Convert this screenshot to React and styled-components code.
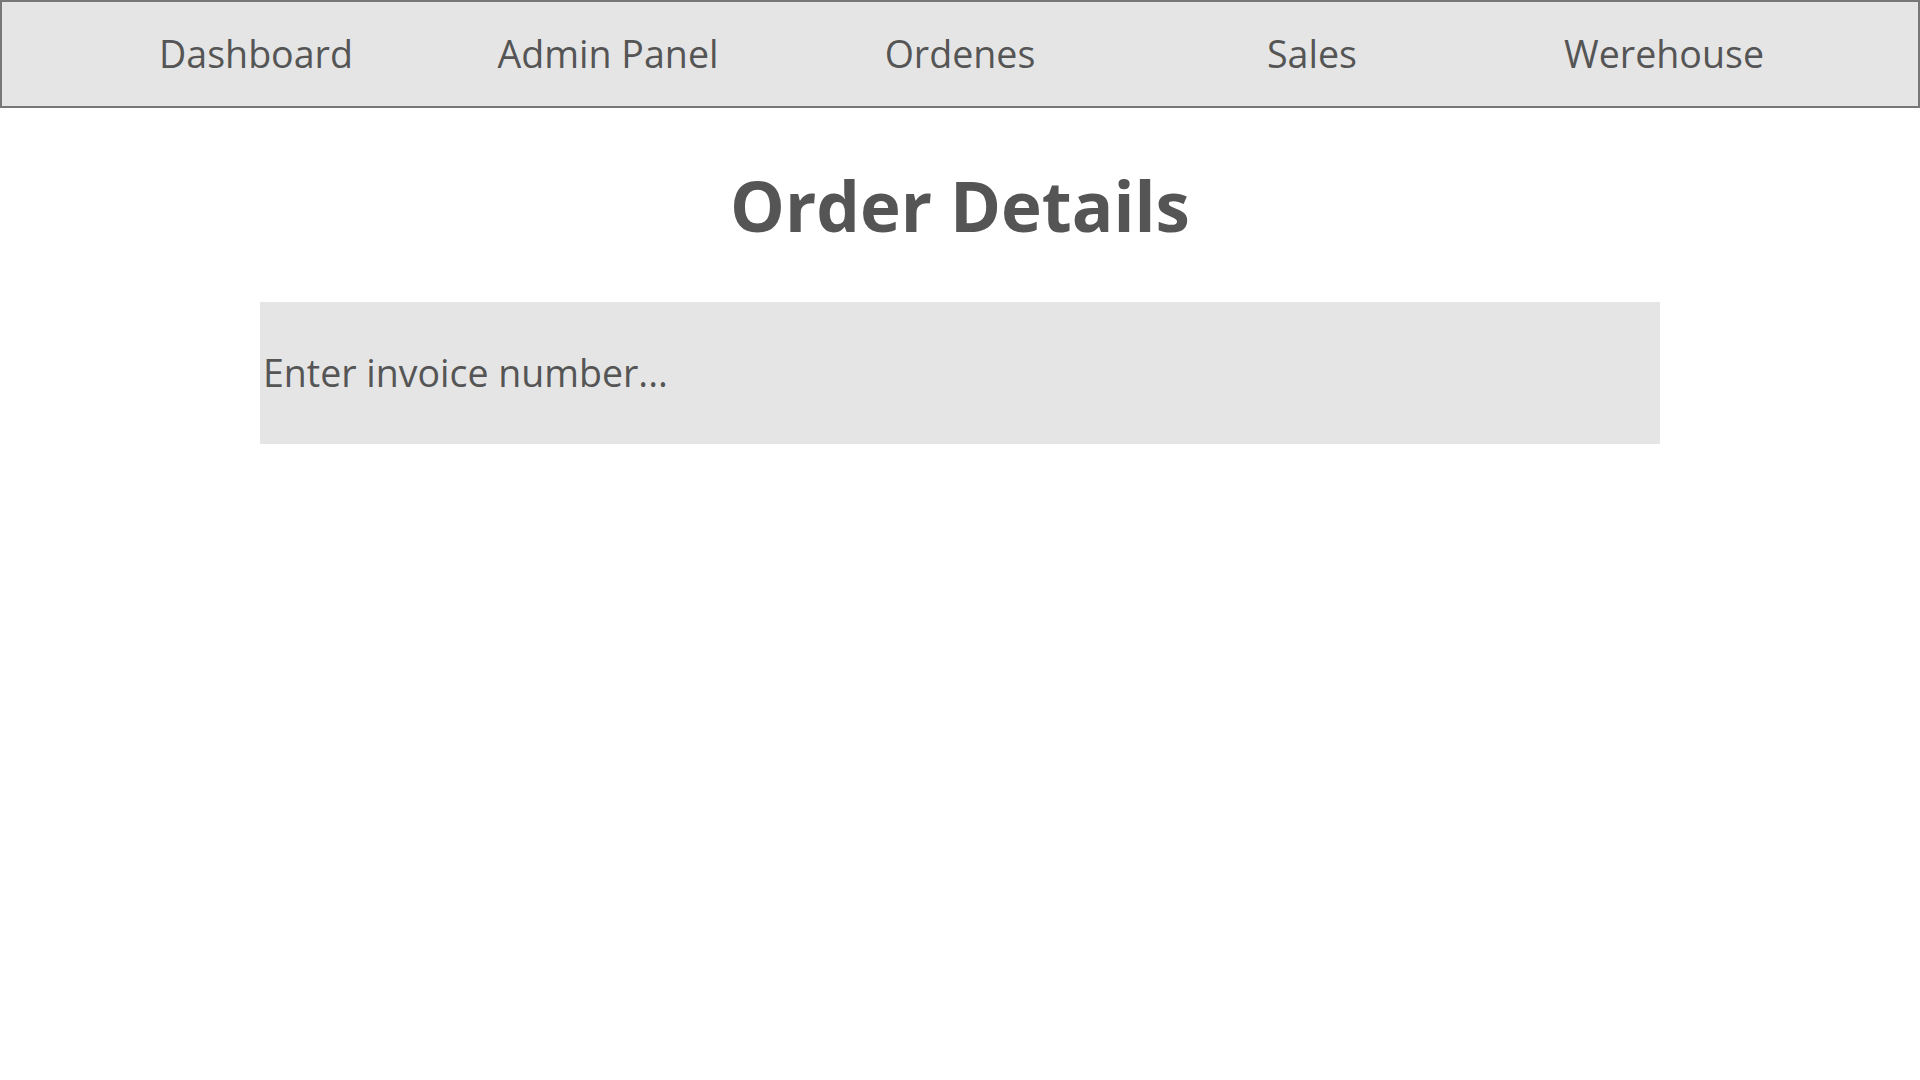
import styled, { createGlobalStyle } from "styled-components";

const GlobalStyle = createGlobalStyle`
  body {
    margin: 0;
    background: #ffffff;
    font-family: "Open Sans", "Noto Sans", sans-serif;
    color: #555555;
  }
`;

const links = ["Dashboard", "Admin Panel", "Ordenes", "Sales", "Werehouse"];

function App() {
  return (
    <>
      <GlobalStyle />
      <NavBar>
        {links.map((link) => (
          <NavLink key={link} href="#">
            {link}
          </NavLink>
        ))}
      </NavBar>
      <Main>
        <Title>Order Details</Title>
        <SearchInput placeholder="Enter invoice number..." />
      </Main>
    </>
  );
}

export default App;

const NavBar = styled.nav`
  display: grid;
  grid-template-columns: repeat(5, 1fr);
  align-items: center;
  height: 108px;
  box-sizing: border-box;
  padding: 0 78px 2px;
  background-color: #e5e5e5;
  border: 2px solid #777777;
`;

const NavLink = styled.a`
  justify-self: center;
  font-size: 37.6px;
  color: #555555;
  text-decoration: none;
`;

const Main = styled.main`
  display: flex;
  flex-direction: column;
  align-items: center;
`;

const Title = styled.h1`
  margin: 50px 0 50px;
  font-size: 69px;
  font-weight: 700;
  color: #555555;
`;

const SearchInput = styled.input`
  width: 1400px;
  height: 142px;
  box-sizing: border-box;
  padding: 0 3px 2px;
  border: none;
  outline: none;
  background-color: #e5e5e5;
  font-family: "Open Sans", sans-serif;
  font-size: 37.5px;
  color: #555555;

  &::placeholder {
    color: #555555;
    opacity: 1;
  }
`;
